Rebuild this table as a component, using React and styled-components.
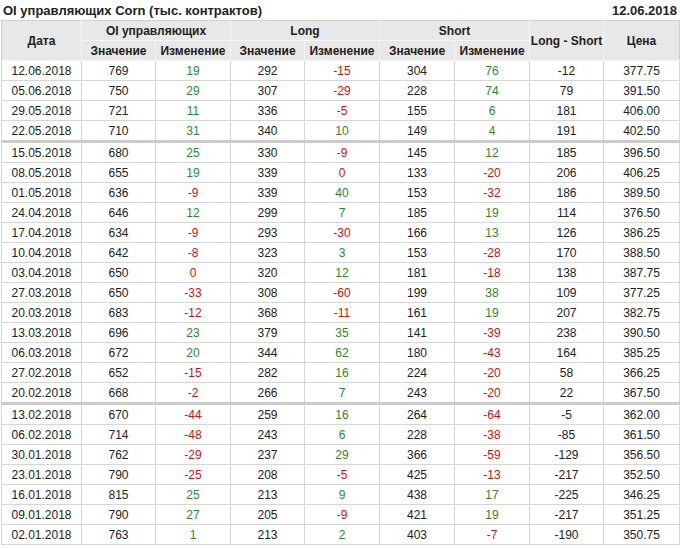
import React from "react";
import styled, { createGlobalStyle } from "styled-components";

const GlobalStyle = createGlobalStyle`
  body {
    margin: 0;
    background: #fff;
    font-family: "Liberation Sans", Arial, sans-serif;
  }
`;

// date, oi, oiCh, long, longCh, short, shortCh, diff, price
const rows = [
  ["12.06.2018", 769, 19, 292, -15, 304, 76, -12, "377.75"],
  ["05.06.2018", 750, 29, 307, -29, 228, 74, 79, "391.50"],
  ["29.05.2018", 721, 11, 336, -5, 155, 6, 181, "406.00"],
  ["22.05.2018", 710, 31, 340, 10, 149, 4, 191, "402.50"],
  ["15.05.2018", 680, 25, 330, -9, 145, 12, 185, "396.50", true],
  ["08.05.2018", 655, 19, 339, 0, 133, -20, 206, "406.25"],
  ["01.05.2018", 636, -9, 339, 40, 153, -32, 186, "389.50"],
  ["24.04.2018", 646, 12, 299, 7, 185, 19, 114, "376.50"],
  ["17.04.2018", 634, -9, 293, -30, 166, 13, 126, "386.25"],
  ["10.04.2018", 642, -8, 323, 3, 153, -28, 170, "388.50"],
  ["03.04.2018", 650, 0, 320, 12, 181, -18, 138, "387.75"],
  ["27.03.2018", 650, -33, 308, -60, 199, 38, 109, "377.25"],
  ["20.03.2018", 683, -12, 368, -11, 161, 19, 207, "382.75"],
  ["13.03.2018", 696, 23, 379, 35, 141, -39, 238, "390.50"],
  ["06.03.2018", 672, 20, 344, 62, 180, -43, 164, "385.25"],
  ["27.02.2018", 652, -15, 282, 16, 224, -20, 58, "366.25"],
  ["20.02.2018", 668, -2, 266, 7, 243, -20, 22, "367.50"],
  ["13.02.2018", 670, -44, 259, 16, 264, -64, -5, "362.00", true],
  ["06.02.2018", 714, -48, 243, 6, 228, -38, -85, "361.50"],
  ["30.01.2018", 762, -29, 237, 29, 366, -59, -129, "356.50"],
  ["23.01.2018", 790, -25, 208, -5, 425, -13, -217, "352.50"],
  ["16.01.2018", 815, 25, 213, 9, 438, 17, -225, "346.25"],
  ["09.01.2018", 790, 27, 205, -9, 421, 19, -217, "351.25"],
  ["02.01.2018", 763, 1, 213, 2, 403, -7, -190, "350.75"],
];

const colWidths = [80, 74, 75, 74, 75, 75, 75, 74, 76];

const Page = styled.div`
  width: 680px;
  padding-left: 1px;
  box-sizing: border-box;
`;

const TitleBar = styled.div`
  display: flex;
  justify-content: space-between;
  align-items: center;
  height: 20px;
  padding: 0 3px 0 2px;
  font-size: 13px;
  font-weight: bold;
  color: #222;
`;

const Table = styled.table`
  border-collapse: collapse;
  table-layout: fixed;
  width: 678px;
  font-size: 12px;
  color: #222;
`;

const Head = styled.th`
  background: #e8e8e8;
  font-weight: bold;
  height: 19px;
  padding: 0;
  text-align: center;
  border: 1px solid #f6f6f6;
  border-top-color: #cfcfcf;
  border-left-color: ${(p) => (p.$first ? "#cfcfcf" : "#f6f6f6")};
  border-right-color: ${(p) => (p.$last ? "#cfcfcf" : "#f6f6f6")};
  white-space: nowrap;
`;

const Row = styled.tr`
  td {
    border-top: ${(p) => (p.$group ? "3px solid #cbcbcb" : "1px solid #d6d6d6")};
  }
`;

const Cell = styled.td`
  height: 19px;
  padding: 0;
  text-align: center;
  border: 1px solid #d6d6d6;
  color: ${(p) => p.$color || "#222"};
  white-space: nowrap;
`;

const changeColor = (v) => (v > 0 ? "#2a8a2a" : v < 0 ? "#cc1111" : "#cc1111");

export default function App() {
  return (
    <Page>
      <GlobalStyle />
      <TitleBar>
        <span>OI управляющих Corn (тыс. контрактов)</span>
        <span>12.06.2018</span>
      </TitleBar>
      <Table>
        <colgroup>
          {colWidths.map((w, i) => (
            <col key={i} style={{ width: w }} />
          ))}
        </colgroup>
        <thead>
          <tr>
            <Head rowSpan={2} $first>Дата</Head>
            <Head colSpan={2}>OI управляющих</Head>
            <Head colSpan={2}>Long</Head>
            <Head colSpan={2}>Short</Head>
            <Head rowSpan={2}>Long - Short</Head>
            <Head rowSpan={2} $last>Цена</Head>
          </tr>
          <tr>
            <Head>Значение</Head>
            <Head>Изменение</Head>
            <Head>Значение</Head>
            <Head>Изменение</Head>
            <Head>Значение</Head>
            <Head>Изменение</Head>
          </tr>
        </thead>
        <tbody>
          {rows.map((r) => (
            <Row key={r[0]} $group={r[9]}>
              <Cell>{r[0]}</Cell>
              <Cell>{r[1]}</Cell>
              <Cell $color={changeColor(r[2])}>{r[2]}</Cell>
              <Cell>{r[3]}</Cell>
              <Cell $color={changeColor(r[4])}>{r[4]}</Cell>
              <Cell>{r[5]}</Cell>
              <Cell $color={changeColor(r[6])}>{r[6]}</Cell>
              <Cell>{r[7]}</Cell>
              <Cell>{r[8]}</Cell>
            </Row>
          ))}
        </tbody>
      </Table>
    </Page>
  );
}
